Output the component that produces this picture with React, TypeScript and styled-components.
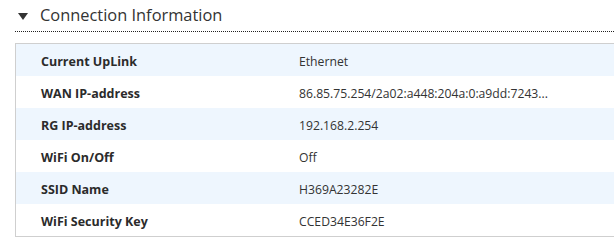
import React from 'react'
import styled, { createGlobalStyle } from 'styled-components'

const rows = [
  { label: 'Current UpLink', value: 'Ethernet' },
  { label: 'WAN IP-address', value: '86.85.75.254/2a02:a448:204a:0:a9dd:7243...' },
  { label: 'RG IP-address', value: '192.168.2.254' },
  { label: 'WiFi On/Off', value: 'Off' },
  { label: 'SSID Name', value: 'H369A23282E' },
  { label: 'WiFi Security Key', value: 'CCED34E36F2E' },
]

const GlobalStyle = createGlobalStyle`
  html, body {
    margin: 0;
    padding: 0;
    background: #fff;
  }
  body {
    font-family: 'Open Sans', 'Noto Sans', sans-serif;
    color: #333;
  }
`

const Section = styled.section`
  padding-left: 15px;
`

const Header = styled.div`
  display: flex;
  align-items: center;
  gap: 12px;
  height: 32px;
  padding-left: 3px;
  border-bottom: 1px dotted #222;
  box-sizing: border-box;
`

const Caret = styled.span`
  width: 0;
  height: 0;
  border-left: 5px solid transparent;
  border-right: 5px solid transparent;
  border-top: 7px solid #333;
  margin-top: 1px;
`

const Title = styled.h2`
  margin: -1px 0 0;
  font-size: 16.4px;
  font-weight: 400;
  color: #333;
  line-height: 1;
`

// open on the right: the grid runs on past the edge of the panel
const Table = styled.div`
  margin-top: 11px;
  border: 1px solid #cfcfcf;
  border-right: none;
  display: flex;
  flex-direction: column;
`

const Row = styled.div<{ $shaded: boolean }>`
  display: grid;
  grid-template-columns: 258px 1fr;
  align-items: center;
  height: 32px;
  padding-top: 2px;
  box-sizing: border-box;
  background: ${(p) => (p.$shaded ? '#eef6fe' : '#fff')};
`

const Label = styled.div`
  padding-left: 25px;
  font-size: 12.5px;
  font-weight: 700;
  color: #2b2b2b;
`

const Value = styled.div`
  padding-left: 25px;
  font-size: 12.2px;
  color: #333;
  white-space: nowrap;
`

export default function App() {
  return (
    <>
      <GlobalStyle />
      <Section>
        <Header>
          <Caret />
          <Title>Connection Information</Title>
        </Header>
        <Table>
          {rows.map((row, i) => (
            <Row key={row.label} $shaded={i % 2 === 0}>
              <Label>{row.label}</Label>
              <Value>{row.value}</Value>
            </Row>
          ))}
        </Table>
      </Section>
    </>
  )
}
